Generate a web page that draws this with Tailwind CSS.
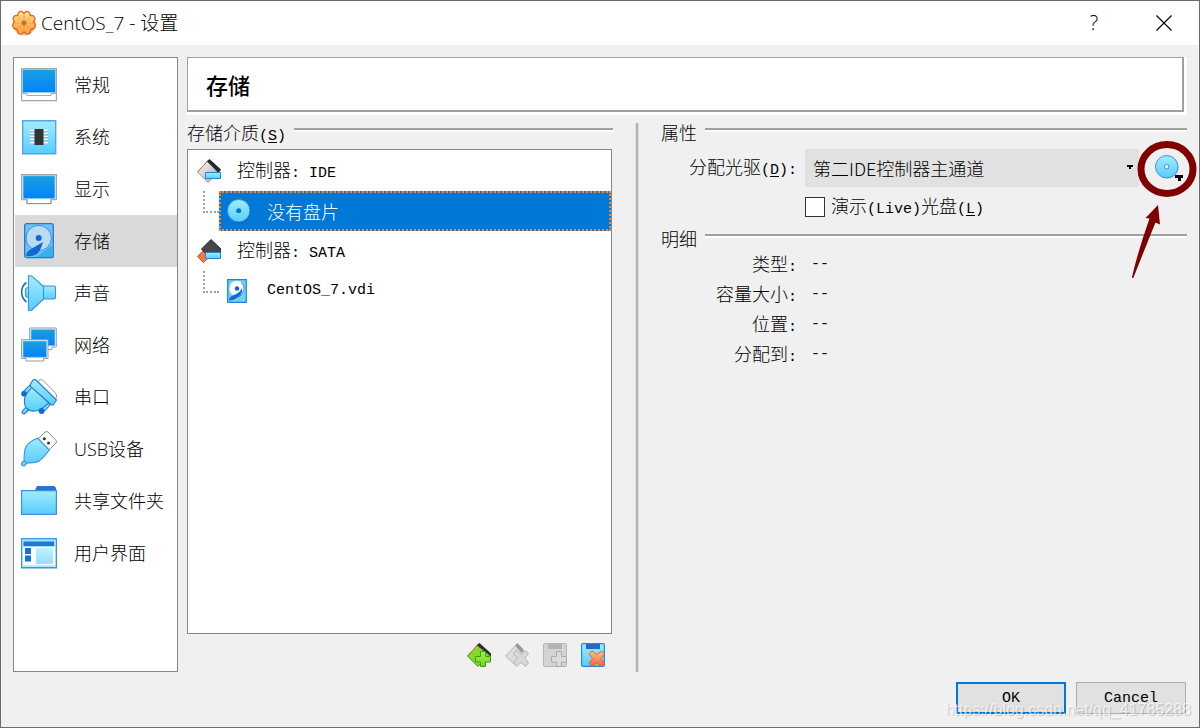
<!DOCTYPE html>
<html lang="zh-CN">
<head>
  <meta charset="UTF-8" />
  <meta name="viewport" content="width=device-width, initial-scale=1.0" />
  <title>CentOS_7 - 设置</title>
  <script src="https://cdn.jsdelivr.net/npm/@tailwindcss/browser@4"></script>
</head>
<body class="font-['Open_Sans','Noto_Sans_CJK_SC',sans-serif] font-light text-lg leading-6 text-black">
  <!-- Shared gradients and symbols -->
  <svg class="absolute w-0 h-0" aria-hidden="true">
    <defs>
      <linearGradient id="screen" x1="0" y1="0" x2="0" y2="1"><stop offset="0" stop-color="#1b9fe0"/><stop offset="1" stop-color="#0083fa"/></linearGradient>
      <linearGradient id="sky" x1="0" y1="0" x2="0" y2="1"><stop offset="0" stop-color="#a2ecfc"/><stop offset="1" stop-color="#58cdff"/></linearGradient>
      <linearGradient id="steel" x1="0" y1="0" x2="1" y2="1"><stop offset="0" stop-color="#fff"/><stop offset="1" stop-color="#a5a5a5"/></linearGradient>
      <linearGradient id="leaf" x1="0" y1="0" x2="0" y2="1"><stop offset="0" stop-color="#a5ee5b"/><stop offset="1" stop-color="#6fd41f"/></linearGradient>
      <linearGradient id="orange" x1="0" y1="0" x2="0" y2="1"><stop offset="0" stop-color="#ffc795"/><stop offset="1" stop-color="#ff5a2e"/></linearGradient>
      <linearGradient id="gear" x1="0" y1="0" x2="0" y2="1"><stop offset="0" stop-color="#ffdf95"/><stop offset="1" stop-color="#ff9c38"/></linearGradient>
    </defs>
    <symbol id="disc" viewBox="0 0 24 24">
      <circle cx="12.5" cy="12.5" r="11.2" fill="#000" opacity=".2"/>
      <circle cx="11.7" cy="11.7" r="11.2" fill="url(#sky)" stroke="#2f8fdd" stroke-width=".9"/>
    </symbol>
    <symbol id="disk" viewBox="0 0 30 36">
      <rect x=".7" y=".7" width="28.6" height="34" rx="2" fill="#6cc4f6" stroke="#2577cf" stroke-width="1.3"/>
      <path d="M12 34 28.500 22V34Z" fill="#35aef2"/>
      <circle cx="14.7" cy="15" r="12.7" fill="#b9daf3" stroke="#3d8fdd"/>
      <circle cx="14.7" cy="15" r="3" fill="#1269d3"/>
      <path d="M19 19 7 26Q1 30 2.500 33Q8 34 13 31Q17 27 19 19Z" fill="#1269d3"/>
    </symbol>
  </svg>

  <div class="min-h-screen flex flex-col border border-[#6b6b6b] bg-[#f0f0f0]">
    <!-- Title bar -->
    <header class="h-11 flex items-center bg-white pl-[10px] pr-[10px]">
      <svg class="size-[26px] mr-1" viewBox="0 0 26 26">
        <circle cx="13.500" cy="14" r="11.500" fill="#8a3b10" opacity=".25"/>
        <path d="M13 3.200Q15.500.500 17.500 1.800 19.500 3 19.200 5.500 22.500 5 23.700 7.500 24.500 10 22.300 12 25 14.500 24 17 22.800 19.500 19.800 19.500 20 22.500 17.800 23.800 15.200 24.700 13 22.300 10.800 24.700 8.200 23.800 6 22.500 6.200 19.500 3.200 19.500 2 17 1 14.500 3.700 12 1.500 10 2.300 7.500 3.500 5 6.800 5.500 6.500 3 8.500 1.800 10.500.500 13 3.200Z" fill="url(#gear)" stroke="#e8641c" stroke-width="1.300"/>
        <path d="M13 5v4M13 16v4M7 7.500l3 3M19 7.500l-3 3M5.500 13H9M17 13h3.500M7.500 18.500l2.500-3M18.500 18.500l-2.500-3" stroke="#f5953a" stroke-width="1"/>
        <circle cx="13" cy="13" r="2.500" fill="#b57632" stroke="#ef9335"/>
      </svg>
      <h1 class="flex-1 text-[19px]">CentOS_7 - 设置</h1>
      <div class="flex gap-5">
        <button type="button" aria-label="帮助" class="w-[50px] text-xl">?</button>
        <button type="button" aria-label="关闭" class="w-[50px] flex justify-center items-center">
          <svg class="size-4" viewBox="0 0 16 16"><path d="M.5.5l15 15M15.500.5l-15 15" stroke="#000" stroke-width="1.200"/></svg>
        </button>
      </div>
    </header>

    <div class="flex-1 flex flex-col px-3 pt-3 pb-[13px] gap-[10px]">
      <div class="flex-1 flex gap-[9px]">
        <!-- Categories -->
        <nav class="w-[165px] shrink-0 border border-[#828790] bg-white pl-px py-px">
          <button type="button" class="w-full h-[52px] flex items-center gap-[17px] pl-[6px]">
            <svg class="size-9 shrink-0" viewBox="0 0 36 36"><path d="M.6 1.600h34.800v32H.6z" fill="#fff" stroke="#a5a5a5" stroke-width="1.200"/><path d="M1.500 2.500h33v23h-33z" fill="url(#screen)" stroke="#86d0f0"/><path d="M1 26.500h5v2h24v-2h5" fill="none" stroke="#aaa"/></svg>
            常规
          </button>
          <button type="button" class="w-full h-[52px] flex items-center gap-[17px] pl-[6px]">
            <svg class="size-9 shrink-0" viewBox="0 0 36 36"><path d="M1.700 1.700h33v33h-33z" fill="url(#sky)" stroke="#55a5e8" stroke-width="1.400"/><path d="M9 11.500h18M9 14.500h18M9 17.500h18M9 20.500h18M9 23.500h18" stroke="#fff" stroke-width="1.700"/><path d="M9 12.700h18M9 15.700h18M9 18.700h18M9 21.700h18" stroke="#6fa8c8" stroke-width=".7"/><path d="M13.500 10h9v16h-9z" fill="#333"/></svg>
            系统
          </button>
          <button type="button" class="w-full h-[52px] flex items-center gap-[17px] pl-[6px]">
            <svg class="size-9 shrink-0" viewBox="0 0 36 36"><path d="M.6 3.600h34.800v25H30v4H6v-4H.6z" fill="#fff" stroke="#a5a5a5" stroke-width="1.200"/><path d="M2 4.700h32v23H2z" fill="url(#screen)" stroke="#86d0f0"/><path d="M6 29.500v3h24v-3" fill="none" stroke="#999"/></svg>
            显示
          </button>
          <button type="button" aria-current="page" class="w-full h-[52px] flex items-center gap-[17px] pl-[6px] bg-[#d9d9d9]">
            <svg class="size-9 shrink-0" viewBox="0 0 36 36"><use href="#disk" x="3" width="30" height="36"/></svg>
            存储
          </button>
          <button type="button" class="w-full h-[52px] flex items-center gap-[17px] pl-[6px]">
            <svg class="size-9 shrink-0" viewBox="0 0 36 36"><g fill="url(#sky)" stroke="#3b92dc" stroke-width="1.100" stroke-linejoin="round"><path d="M8 12.500Q4.500 12.500 4.500 15v5q0 2.500 3.500 2.500z"/><path d="M22 11h11q1.500 0 1.500 1.500v10q0 1.500-1.500 1.500H22z"/><path d="M7.500.7h2q1 0 2 1L22.500 11.500v12.500L11.500 34.500q-1 1-2 1h-2z"/></g><path d="M5.500 7.500C-1 12-1 22 5.500 27" fill="none" stroke="#1d70c5" stroke-width="1.600"/></svg>
            声音
          </button>
          <button type="button" class="w-full h-[52px] flex items-center gap-[17px] pl-[6px]">
            <svg class="size-9 shrink-0" viewBox="0 0 36 36"><path d="M8.700 1h26.600v19H31v2.500H13V20H8.700z" fill="#fff" stroke="#999"/><path d="M10 2.300h24v16.500H10z" fill="url(#screen)" stroke="#86d0f0" stroke-width=".8"/><path d="M.6 12.700h26.400v18.800H22.500V34H5v-2.500H.6z" fill="#fff" stroke="#999"/><path d="M2 14h23.700v16.300H2z" fill="url(#screen)" stroke="#86d0f0" stroke-width=".8"/></svg>
            网络
          </button>
          <button type="button" class="w-full h-[52px] flex items-center gap-[17px] pl-[6px]">
            <svg class="size-9 shrink-0" viewBox="0 0 36 36"><path d="M17 3q2-4 5-1.500L34.500 14q2.500 3 0 6z" fill="#fff" stroke="#999"/><g fill="url(#sky)" stroke="#277fd2" stroke-width="1.100"><path d="M2 13 9 6l3 3-6.500 7z"/><path d="m19 31 7-8 3 3-6.500 7z"/><path d="M1 32.500 5 28l3 2.500-4.500 4.500Q1 35 1 32.500z"/><path d="M11 8 4.500 16Q2 24 5 29q5 5 14 2l9-7z"/><path d="M9.500 5 12 1q1.500-1 3 0l20.500 20-3 4.500q-1 1-2.500 0L10 8q-1-1.500-.5-3z"/></g><circle cx="3" cy="14.800" r="2.800" fill="#126bd5"/><circle cx="20.500" cy="32" r="2.900" fill="#126bd5"/></svg>
            串口
          </button>
          <button type="button" class="w-full h-[52px] flex items-center gap-[17px] pl-[6px]">
            <svg class="size-9 shrink-0" viewBox="0 0 36 36"><path d="m17 8 7-7q1.500-1 3 0l8 8.500q1 1.500 0 2.500l-7 7z" fill="#fff" stroke="#888"/><circle cx="23.300" cy="7.700" r="1.500" fill="#333"/><circle cx="27.500" cy="12" r="1.500" fill="#333"/><g fill="url(#sky)" stroke="#3b92dc" stroke-width="1.100"><path d="m.7 32 4-3.500 2 3-3.500 3.500Q0 35 .7 32z"/><path d="M16.500 7Q5.500 12 4 18q-1 5-1 11.500l2.500 2.500q9 0 12.500-2 4-2.500 10.300-11z"/></g></svg>
            USB设备
          </button>
          <button type="button" class="w-full h-[52px] flex items-center gap-[17px] pl-[6px]">
            <svg class="size-9 shrink-0" viewBox="0 0 36 36"><path d="m13.500 8 2.500-5h16.500q1.500 0 2.500 2v3z" fill="#2874d0"/><path d="M.6 7.600h34.800v23.800H.6z" fill="url(#sky)" stroke="#3d91df" stroke-width="1.200"/></svg>
            共享文件夹
          </button>
          <button type="button" class="w-full h-[52px] flex items-center gap-[17px] pl-[6px]">
            <svg class="size-9 shrink-0" viewBox="0 0 36 36"><path d="M.7 3.700h34.600v29H.7z" fill="#fff" stroke="#3696e0" stroke-width="1.400"/><path d="M2 5h32v7H2z" fill="#9be6fc"/><path d="M2.500 6.500h30.500v4.500H2.500z" fill="#2875d1"/><path d="M4 13h6v6H4zM4 20.500h6v6H4z" fill="#1670d8"/><path d="M15 13h17v16H15z" fill="url(#sky)" opacity=".65"/><path d="M2 31h32" stroke="#9be6fc" stroke-width="1.500"/></svg>
            用户界面
          </button>
        </nav>

        <!-- Storage page -->
        <main class="flex-1 flex flex-col gap-2 font-['Noto_Sans_CJK_SC',sans-serif] leading-[18px]">
          <div class="border-r-[3px] border-b-[3px] border-white">
            <h2 class="h-[55px] flex items-center pl-[18px] border border-r-2 border-b-2 border-[#a0a0a0] bg-white text-[22px] leading-7 font-medium">存储</h2>
          </div>

          <div class="flex-1 grid grid-cols-[426fr_4px_526fr] gap-x-[22px]">
            <section class="flex flex-col pb-[5px]">
              <div class="h-[18px] flex items-start gap-2 mb-2">
                <h3>存储介质<span class="font-['Liberation_Mono'] text-[15px]">(<u class="underline-offset-2">S</u>)</span></h3>
                <div class="flex-1 mt-[5px] border-t-2 border-b-2 border-t-[#a0a0a0] border-b-white"></div>
              </div>
              <ul class="flex-1 mr-px pt-px border border-[#828790] bg-white">
                <li class="h-10 flex items-center gap-4 pl-[9px]">
                  <svg class="size-6" viewBox="0 0 24 24"><path d="M.5 13 11.500 1 23 11.500 11 23.500z" fill="url(#steel)" stroke="#999"/><path d="M.5 13 11.500 1" stroke="#f06b34"/><path d="m10 2.500 2.500-2.500L24 10.500 21.500 14z" fill="#292929"/><path d="M8.500 13.500h15v6h-15z" fill="url(#sky)" stroke="#2585d5"/></svg>
                  <span>控制器<span class="font-['Liberation_Mono'] text-[15px] whitespace-pre">: IDE</span></span>
                </li>
                <li class="h-10 flex pl-[15px]">
                  <span class="w-4 h-[22px] shrink-0 border-l-2 border-b-2 border-dotted border-[#a0a0a0]"></span>
                  <div class="flex-1 flex items-center gap-4 pl-[6px] border-2 border-dotted border-[#ff8728] bg-[#0078d7] text-white">
                    <svg class="size-6" viewBox="0 0 24 24"><use href="#disc" width="24" height="24"/><circle cx="11.700" cy="11.700" r="2.500" fill="#0870c8"/></svg>
                    <span>没有盘片</span>
                  </div>
                </li>
                <li class="h-10 flex items-center gap-4 pl-[9px]">
                  <svg class="size-6" viewBox="0 0 24 24"><path d="m.5 17.500 6-6 6 6.500-6 5.500z" fill="#f97842" stroke="#e5521f"/><path d="M4.500 10 14 .5 24 10v5l-3 3h-9z" fill="#474747" stroke="#292929"/><path d="M8.500 13.500h15v6h-15z" fill="url(#sky)" stroke="#2585d5"/></svg>
                  <span>控制器<span class="font-['Liberation_Mono'] text-[15px] whitespace-pre">: SATA</span></span>
                </li>
                <li class="h-10 flex pl-[15px]">
                  <span class="w-4 h-[22px] shrink-0 border-l-2 border-b-2 border-dotted border-[#a0a0a0]"></span>
                  <div class="flex-1 flex items-center gap-4 pl-2">
                    <svg class="size-6" viewBox="0 0 24 24"><path d="M.7.700h18.600v22.600H.7z" fill="#70d1fa" stroke="#2483d8" stroke-width="1.200"/><circle cx="10" cy="9.500" r="7.700" fill="#fff"/><circle cx="10" cy="9.500" r="2.300" fill="#1269d3"/><path d="M15 9q1 6-4 9-4 3.500-9 3.500 0-4 5-5.500 5-1.500 8-7z" fill="#1269d3"/><path d="M14.500 3.500Q18 7 17 11t-5 7" fill="none" stroke="#2a7fd8"/></svg>
                    <span class="font-['Liberation_Mono'] text-[15px]">CentOS_7.vdi</span>
                  </div>
                </li>
              </ul>
              <div class="flex justify-end gap-[14px] mt-[9px] pr-2">
                <button type="button" aria-label="添加控制器">
                  <svg class="size-6" viewBox="0 0 24 24"><path d="M.5 13 11.500 1 23 11.500 11 23.500z" fill="#80da2a" stroke="#3f8f12"/><path d="M.5 13 11.500 1" stroke="#f06b34"/><path d="m10 2.500 2.500-2.500L24 10.500v3z" fill="#2c2c36"/><path d="M13.500 8.500h5v5h5v5.500h-5v4.500h-5V19h-5v-5.500h5z" fill="url(#leaf)" stroke="#419b12"/></svg>
                </button>
                <button type="button" aria-label="删除控制器" disabled>
                  <svg class="size-6" viewBox="0 0 24 24"><path d="M.5 13 11.500 1.500 20 9.500 9.500 21.500z" fill="#dcdcdc" stroke="#b7b7b7"/><path d="m10 2.500 2.500-2.500 6.500 7-2.500 3z" fill="#999"/><path d="m8.500 10.500 3-3 4.500 4 4.500-4 3 3-3.500 4.500 3.500 5-3 3.500-4.500-4-4.500 4-3-3.500 4-5z" fill="#d8d8d8" stroke="#b4b4b4"/></svg>
                </button>
                <button type="button" aria-label="添加虚拟介质" disabled>
                  <svg class="size-6" viewBox="0 0 24 24"><rect x=".5" y=".5" width="23" height="23" rx="1.500" fill="#d4d4d4" stroke="#b5b5b5"/><path d="M5 1h14v5H5z" fill="#b4b4b4"/><path d="M13.500 8.500h5v5h5v5.500h-5v4.500h-5V19h-5v-5.500h5z" fill="#dcdcdc" stroke="#aaa"/></svg>
                </button>
                <button type="button" aria-label="删除虚拟介质">
                  <svg class="size-6" viewBox="0 0 24 24"><rect x=".6" y=".6" width="22.800" height="22.800" rx="1.500" fill="url(#sky)" stroke="#2585df" stroke-width="1.200"/><path d="M5 1h14v5H5z" fill="#2369cc"/><path d="m8 11 3-3 4.500 3.500L20.500 8l3 3-3.500 4.500 3.500 5-3 3-5-3.500-4.500 3.500-3-3 3.500-5z" fill="url(#orange)" stroke="#ed5c27"/></svg>
                </button>
              </div>
            </section>

            <div class="border-x border-[#dcdcdc] bg-[#b4b4b4]"></div>

            <section>
              <div class="h-[18px] flex items-start gap-2 mb-2">
                <h3>属性</h3>
                <div class="flex-1 mt-[5px] border-t-2 border-b-2 border-t-[#a0a0a0] border-b-white"></div>
              </div>
              <div class="grid grid-cols-[136px_1fr_40px] gap-2 items-center">
                <label for="drive" class="text-right">分配光驱<span class="font-['Liberation_Mono'] text-[15px]">(<u class="underline-offset-2">D</u>):</span></label>
                <div class="relative">
                  <select id="drive" class="block w-full h-[38px] appearance-none pl-2 bg-[#e1e1e1]">
                    <option>第二IDE控制器主通道</option>
                  </select>
                  <svg class="absolute right-[6px] top-4 w-[6px] h-1 pointer-events-none" viewBox="0 0 6 4"><path d="M0 0h6v2H4v2H2V2H0z"/></svg>
                </div>
                <div class="relative">
                  <button type="button" aria-label="选择虚拟光盘" class="w-full h-[38px] flex justify-center items-center">
                    <svg class="w-7 h-[26px] overflow-visible" viewBox="0 0 28 26"><use href="#disc" x="2" width="24" height="24"/><circle cx="13.700" cy="11.700" r="2.300" fill="#e5f8ff" stroke="#3f8fc5"/><path d="M22 20h8v3h-2v3h-3v-3h-3z"/></svg>
                  </button>
                  <!-- Hand-drawn ring and arrow -->
                  <svg class="absolute -left-[17px] -top-[10px] w-[70px] h-[145px] pointer-events-none" viewBox="0 0 70 145"><ellipse cx="37" cy="30" rx="26" ry="24.500" fill="none" stroke="#800000" stroke-width="7"/><path d="M28 66 15.500 79l4 .5Q8 112 2 138q0 2 1.500.5Q14 112 25.500 83.500l4.500 2z" fill="#800000"/></svg>
                </div>
                <label class="col-start-2 h-6 flex items-center gap-[6px]">
                  <input type="checkbox" class="appearance-none size-5 border border-[#333] bg-white" />
                  <span>演示<span class="font-['Liberation_Mono'] text-[15px]">(Live)</span>光盘<span class="font-['Liberation_Mono'] text-[15px]">(<u class="underline-offset-2">L</u>)</span></span>
                </label>
              </div>

              <div class="h-[18px] flex items-start gap-2 mt-[10px] mb-[3px]">
                <h3>明细</h3>
                <div class="flex-1 mt-[5px] border-t-2 border-b-2 border-t-[#a0a0a0] border-b-white"></div>
              </div>
              <dl class="grid grid-cols-[136px_1fr] auto-rows-[30px] gap-x-[14px] items-center">
                <dt class="text-right">类型<span class="font-['Liberation_Mono'] text-[15px]">:</span></dt><dd class="font-['Liberation_Mono'] text-[15px]">--</dd>
                <dt class="text-right">容量大小<span class="font-['Liberation_Mono'] text-[15px]">:</span></dt><dd class="font-['Liberation_Mono'] text-[15px]">--</dd>
                <dt class="text-right">位置<span class="font-['Liberation_Mono'] text-[15px]">:</span></dt><dd class="font-['Liberation_Mono'] text-[15px]">--</dd>
                <dt class="text-right">分配到<span class="font-['Liberation_Mono'] text-[15px]">:</span></dt><dd class="font-['Liberation_Mono'] text-[15px]">--</dd>
              </dl>
            </section>
          </div>
        </main>
      </div>

      <footer class="relative flex justify-end gap-[10px] pr-px font-['Liberation_Mono',monospace] text-[15px]">
        <button type="button" class="w-[110px] h-8 pt-[2px] border-2 border-[#0078d7] bg-[#e1e1e1]">OK</button>
        <button type="button" class="w-[110px] h-8 pt-[2px] border border-[#adadad] bg-[#e1e1e1]">Cancel</button>
        <!-- Watermark -->
        <span class="absolute -right-1 top-4 font-['Liberation_Sans',sans-serif] text-base leading-6 text-white/70 text-shadow-[1px_1px_1px_#00000030] pointer-events-none">https://blog.csdn.net/qq_41785288</span>
      </footer>
    </div>
  </div>
</body>
</html>
